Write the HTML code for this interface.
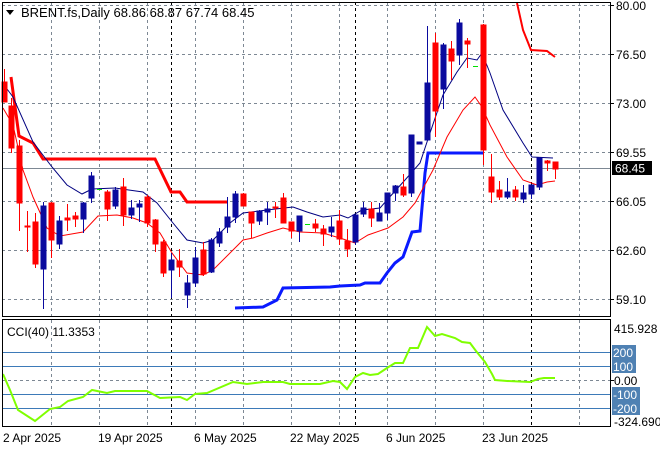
<!DOCTYPE html>
<html><head><meta charset="utf-8"><style>
html,body{margin:0;padding:0;background:#fff;width:660px;height:450px;overflow:hidden}
svg{display:block}
text{font-family:"Liberation Sans",sans-serif;font-size:12px}
</style></head><body>
<svg width="660" height="450" viewBox="0 0 660 450" xmlns="http://www.w3.org/2000/svg">
<rect width="660" height="450" fill="#fff"/>
<g stroke="#7d8894" stroke-dasharray="3,3" stroke-width="1">
<line x1="2" y1="5.5" x2="610" y2="5.5"/><line x1="2" y1="54.5" x2="610" y2="54.5"/><line x1="2" y1="103.5" x2="610" y2="103.5"/><line x1="2" y1="152.5" x2="610" y2="152.5"/><line x1="2" y1="201.5" x2="610" y2="201.5"/><line x1="2" y1="250.5" x2="610" y2="250.5"/><line x1="2" y1="299.5" x2="610" y2="299.5"/>
<line x1="2" y1="380.5" x2="610" y2="380.5"/>
<g id="vg"><line x1="51.5" y1="2" x2="51.5" y2="427"/><line x1="99.5" y1="2" x2="99.5" y2="427"/><line x1="147.5" y1="2" x2="147.5" y2="427"/><line x1="195.5" y1="2" x2="195.5" y2="427"/><line x1="243.5" y1="2" x2="243.5" y2="427"/><line x1="291.5" y1="2" x2="291.5" y2="427"/><line x1="339.5" y1="2" x2="339.5" y2="427"/><line x1="387.5" y1="2" x2="387.5" y2="427"/><line x1="435.5" y1="2" x2="435.5" y2="427"/><line x1="483.5" y1="2" x2="483.5" y2="427"/><line x1="579.5" y1="2" x2="579.5" y2="427"/></g>
</g>
<g stroke="#000" stroke-dasharray="3,3"><line x1="171.5" y1="2" x2="171.5" y2="427"/><line x1="355.5" y1="2" x2="355.5" y2="427"/><line x1="531.5" y1="2" x2="531.5" y2="427"/></g>
<line x1="2" y1="168.5" x2="610" y2="168.5" stroke="#7d8894"/>
<g stroke="#3d7ab8"><line x1="2" y1="352.5" x2="610" y2="352.5"/><line x1="2" y1="366.5" x2="610" y2="366.5"/><line x1="2" y1="394.5" x2="610" y2="394.5"/><line x1="2" y1="408.5" x2="610" y2="408.5"/></g>
<polyline fill="none" stroke="#ff0000" stroke-width="3" points="11,77 19,136 33,143 43,159 155,159 171,192 180,192 187,202 227,202"/>
<polyline fill="none" stroke="#ff0000" stroke-width="2" points="517,3 523,30 531,50 547,51 555,57"/>
<polyline fill="none" stroke="#0a1aff" stroke-width="3" points="235,308 263,307 277,300 283,288 330,287 340,286 360,285 365,283 380,283 387,273 395,263 403,257 412,232 420,231 425,173 428,153 483,153"/>
<polyline fill="none" stroke="#000080" stroke-width="1" points="4,85 13,97 33,142 52,167 67,185 82,194 92,189 115,188 143,192 157,203 173,223 187,240 203,243 213,240 230,223 243,213 267,210 293,207 307,212 323,217 340,215 348,218 362,210 380,208 387,200 405,180 420,163 430,133 443,95 457,72 467,58 477,60 482,53 490,73 503,110 523,143 532,157 553,158"/>
<polyline fill="none" stroke="#ff0000" stroke-width="1" points="3,108 13,125 23,170 33,197 47,228 60,236 83,232 98,216 117,215 133,218 147,223 160,233 172,253 187,273 203,275 213,270 243,240 253,238 267,233 283,228 300,232 323,233 343,239 355,243 368,235 388,228 403,217 415,203 433,170 447,137 463,110 475,97 482,107 490,125 507,157 523,180 537,185 547,182 555,181"/>
<g stroke-width="1">
<g fill="#ff0000" stroke="#ff0000">
<line x1="4.5" y1="69" x2="4.5" y2="102"/><rect x="2" y="82" width="5" height="20"/>
<line x1="11.5" y1="98" x2="11.5" y2="153"/><rect x="9" y="106" width="5" height="42"/>
<line x1="19.5" y1="140" x2="19.5" y2="231"/><rect x="17" y="146" width="5" height="57"/>
<line x1="27.5" y1="211" x2="27.5" y2="252"/><rect x="25" y="226" width="5" height="1"/>
<line x1="35.5" y1="213" x2="35.5" y2="268"/><rect x="33" y="222" width="5" height="42"/>
<line x1="51.5" y1="202" x2="51.5" y2="258"/><rect x="49" y="203" width="5" height="37"/>
<line x1="67.5" y1="204" x2="67.5" y2="231"/><rect x="65" y="218" width="5" height="2"/>
<line x1="75.5" y1="212" x2="75.5" y2="227"/><rect x="73" y="216" width="5" height="3"/>
<line x1="107.5" y1="190" x2="107.5" y2="221"/><rect x="105" y="192" width="5" height="17"/>
<line x1="123.5" y1="178" x2="123.5" y2="226"/><rect x="121" y="187" width="5" height="28"/>
<line x1="147.5" y1="195" x2="147.5" y2="227"/><rect x="145" y="197" width="5" height="26"/>
<line x1="155.5" y1="219" x2="155.5" y2="252"/><rect x="153" y="220" width="5" height="24"/>
<line x1="163.5" y1="240" x2="163.5" y2="277"/><rect x="161" y="242" width="5" height="31"/>
<line x1="179.5" y1="249" x2="179.5" y2="277"/><rect x="177" y="261" width="5" height="6"/>
<line x1="203.5" y1="242" x2="203.5" y2="276"/><rect x="201" y="250" width="5" height="24"/>
<line x1="243.5" y1="193" x2="243.5" y2="206"/><rect x="241" y="194" width="5" height="12"/>
<line x1="251.5" y1="212" x2="251.5" y2="238"/><rect x="249" y="212" width="5" height="11"/>
<line x1="275.5" y1="202" x2="275.5" y2="218"/><rect x="273" y="207" width="5" height="1"/>
<line x1="283.5" y1="193" x2="283.5" y2="223"/><rect x="281" y="198" width="5" height="25"/>
<line x1="291.5" y1="222" x2="291.5" y2="238"/><rect x="289" y="222" width="5" height="9"/>
<line x1="315.5" y1="219" x2="315.5" y2="232"/><rect x="313" y="224" width="5" height="4"/>
<line x1="323.5" y1="225" x2="323.5" y2="246"/><rect x="321" y="229" width="5" height="5"/>
<line x1="339.5" y1="210" x2="339.5" y2="245"/><rect x="337" y="221" width="5" height="18"/>
<line x1="347.5" y1="229" x2="347.5" y2="257"/><rect x="345" y="241" width="5" height="8"/>
<line x1="371.5" y1="202" x2="371.5" y2="227"/><rect x="369" y="209" width="5" height="9"/>
<line x1="403.5" y1="174" x2="403.5" y2="197"/><rect x="401" y="187" width="5" height="8"/>
<line x1="435.5" y1="33" x2="435.5" y2="137"/><rect x="433" y="43" width="5" height="68"/>
<line x1="451.5" y1="41" x2="451.5" y2="80"/><rect x="449" y="49" width="5" height="12"/>
<line x1="467.5" y1="38" x2="467.5" y2="68"/><rect x="465" y="41" width="5" height="3"/>
<line x1="483.5" y1="24" x2="483.5" y2="165"/><rect x="481" y="25" width="5" height="125"/>
<line x1="491.5" y1="154" x2="491.5" y2="203"/><rect x="489" y="177" width="5" height="15"/>
<line x1="499.5" y1="181" x2="499.5" y2="200"/><rect x="497" y="190" width="5" height="7"/>
<line x1="515.5" y1="186" x2="515.5" y2="201"/><rect x="513" y="190" width="5" height="7"/>
<line x1="547.5" y1="160" x2="547.5" y2="171"/><rect x="545" y="161" width="5" height="2"/>
<line x1="555.5" y1="162" x2="555.5" y2="179"/><rect x="553" y="162" width="5" height="7"/>
</g>
<g fill="#0a0a9e" stroke="#0a0a9e">
<line x1="43.5" y1="202" x2="43.5" y2="309"/><rect x="41" y="206" width="5" height="63"/>
<line x1="59.5" y1="216" x2="59.5" y2="249"/><rect x="57" y="221" width="5" height="23"/>
<line x1="83.5" y1="202" x2="83.5" y2="233"/><rect x="81" y="203" width="5" height="16"/>
<line x1="91.5" y1="172" x2="91.5" y2="203"/><rect x="89" y="176" width="5" height="22"/>
<line x1="115.5" y1="187" x2="115.5" y2="209"/><rect x="113" y="190" width="5" height="16"/>
<line x1="131.5" y1="200" x2="131.5" y2="219"/><rect x="129" y="208" width="5" height="7"/>
<line x1="139.5" y1="200" x2="139.5" y2="222"/><rect x="137" y="204" width="5" height="3"/>
<line x1="171.5" y1="253" x2="171.5" y2="298"/><rect x="169" y="260" width="5" height="10"/>
<line x1="187.5" y1="275" x2="187.5" y2="308"/><rect x="185" y="283" width="5" height="12"/>
<line x1="195.5" y1="247" x2="195.5" y2="287"/><rect x="193" y="258" width="5" height="25"/>
<line x1="211.5" y1="238" x2="211.5" y2="273"/><rect x="209" y="240" width="5" height="32"/>
<line x1="219.5" y1="228" x2="219.5" y2="247"/><rect x="217" y="232" width="5" height="11"/>
<line x1="227.5" y1="197" x2="227.5" y2="233"/><rect x="225" y="217" width="5" height="10"/>
<line x1="235.5" y1="191" x2="235.5" y2="223"/><rect x="233" y="194" width="5" height="23"/>
<line x1="259.5" y1="210" x2="259.5" y2="225"/><rect x="257" y="211" width="5" height="10"/>
<line x1="267.5" y1="202" x2="267.5" y2="225"/><rect x="265" y="209" width="5" height="3"/>
<line x1="299.5" y1="216" x2="299.5" y2="242"/><rect x="297" y="216" width="5" height="15"/>
<line x1="331.5" y1="217" x2="331.5" y2="237"/><rect x="329" y="227" width="5" height="5"/>
<line x1="355.5" y1="215" x2="355.5" y2="245"/><rect x="353" y="215" width="5" height="27"/>
<line x1="363.5" y1="202" x2="363.5" y2="217"/><rect x="361" y="208" width="5" height="6"/>
<line x1="379.5" y1="203" x2="379.5" y2="221"/><rect x="377" y="213" width="5" height="8"/>
<line x1="387.5" y1="193" x2="387.5" y2="220"/><rect x="385" y="193" width="5" height="20"/>
<line x1="395.5" y1="185" x2="395.5" y2="201"/><rect x="393" y="186" width="5" height="7"/>
<line x1="411.5" y1="135" x2="411.5" y2="197"/><rect x="409" y="135" width="5" height="58"/>
<rect x="417" y="142" width="5" height="2"/>
<line x1="427.5" y1="26" x2="427.5" y2="140"/><rect x="425" y="83" width="5" height="57"/>
<line x1="443.5" y1="43" x2="443.5" y2="109"/><rect x="441" y="45" width="5" height="44"/>
<line x1="459.5" y1="19" x2="459.5" y2="65"/><rect x="457" y="23" width="5" height="32"/>
<line x1="507.5" y1="178" x2="507.5" y2="199"/><rect x="505" y="192" width="5" height="5"/>
<line x1="523.5" y1="185" x2="523.5" y2="203"/><rect x="521" y="193" width="5" height="6"/>
<line x1="531.5" y1="185" x2="531.5" y2="199"/><rect x="529" y="185" width="5" height="9"/>
<line x1="539.5" y1="157" x2="539.5" y2="190"/><rect x="537" y="158" width="5" height="29"/>
</g>
<g stroke="#00e000" stroke-width="1"><line x1="97" y1="189.5" x2="102" y2="189.5"/><line x1="305" y1="224.5" x2="310" y2="224.5"/><line x1="473" y1="66.5" x2="478" y2="66.5"/></g>
</g>
<polyline fill="none" stroke="#7fff00" stroke-width="2" points="3,374 10,390 18,410 35,421 50,409 60,407 68,401 83,397 92,390 107,393 115,391 147,391 160,398 180,397 187,400 195,394 207,393 233,382 247,384 263,382 283,382 290,384 320,384 333,381 340,382 347,389 355,377 363,373 370,375 378,374 387,368 395,363 403,363 410,348 418,348 427,327 435,336 442,334 455,338 462,342 470,343 476,351 485,362 492,374 495,380 507,381 530,382 538,379 544,378 555,378"/>
<rect x="2.5" y="2.5" width="608" height="314" fill="none" stroke="#000"/>
<rect x="2.5" y="319.5" width="608" height="107" fill="none" stroke="#000"/>
<g fill="#000">
<text x="616" y="10">80.00</text><text x="616" y="59">76.50</text><text x="616" y="108">73.00</text><text x="616" y="157">69.55</text><text x="616" y="206">66.05</text><text x="616" y="255">62.60</text><text x="616" y="304">59.10</text>
<text x="614" y="333">415.928</text><text x="614" y="385">0.00</text><text x="614" y="426">-324.690</text>
</g>
<rect x="612" y="161" width="40" height="14" fill="#000"/><text x="615" y="172.5" fill="#fff">68.45</text>
<rect x="612" y="345" width="24" height="28" fill="#4f81b3"/><text x="613" y="357" fill="#fff">200</text><text x="613" y="371" fill="#fff">100</text>
<rect x="612" y="387" width="28" height="28" fill="#4f81b3"/><text x="613" y="399" fill="#fff">-100</text><text x="613" y="413" fill="#fff">-200</text>
<g stroke="#000"><line x1="610" y1="5.5" x2="614" y2="5.5"/><line x1="610" y1="54.5" x2="614" y2="54.5"/><line x1="610" y1="103.5" x2="614" y2="103.5"/><line x1="610" y1="152.5" x2="614" y2="152.5"/><line x1="610" y1="201.5" x2="614" y2="201.5"/><line x1="610" y1="250.5" x2="614" y2="250.5"/><line x1="610" y1="299.5" x2="614" y2="299.5"/><line x1="610" y1="380.5" x2="614" y2="380.5"/></g>
<g fill="#000"><text x="3" y="442">2 Apr 2025</text><text x="98" y="442">19 Apr 2025</text><text x="194" y="442">6 May 2025</text><text x="290" y="442">22 May 2025</text><text x="386" y="442">6 Jun 2025</text><text x="482" y="442">23 Jun 2025</text></g>
<polygon points="6,10 14,10 10,15" fill="#000"/>
<text x="21" y="17" fill="#000" style="font-size:13px">BRENT.fs,Daily  68.86 68.87 67.74 68.45</text>
<text x="7" y="336" fill="#000">CCI(40) 11.3353</text>
</svg>
</body></html>
